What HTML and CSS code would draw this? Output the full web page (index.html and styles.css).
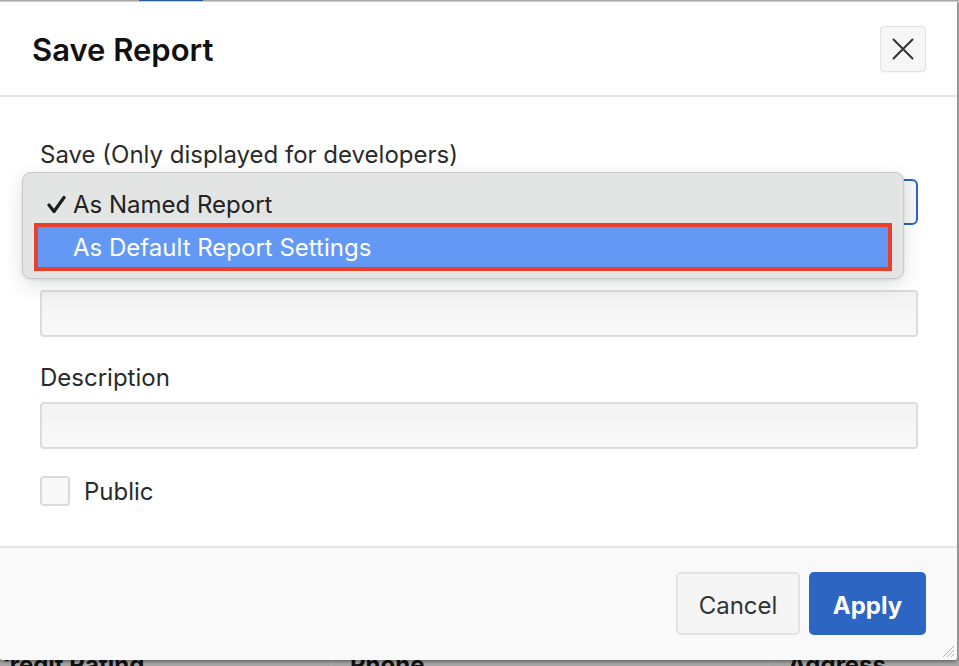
FILE: index.html
```html
<!DOCTYPE html>
<html>
<head>
<meta charset="utf-8">
<link rel="stylesheet" href="styles.css">
</head>
<body>
<div class="page">
  <div class="topbar"><span class="tab-active"></span></div>
  <div class="dialog">
    <div class="dlg-header">
      <h1 class="dlg-title">Save Report</h1>
      <button class="close-btn" aria-label="Close">
        <svg width="22" height="22" viewBox="0 0 22 22"><path d="M1.5 1.5 L20.5 20.5 M20.5 1.5 L1.5 20.5" stroke="#333" stroke-width="2" fill="none" stroke-linecap="round"/></svg>
      </button>
    </div>
    <div class="dlg-body">
      <div class="field">
        <label class="field-label">Save (Only displayed for developers)</label>
        <div class="select-box"></div>
        <div class="menu">
          <div class="menu-item"><span class="check">
            <svg width="19" height="19" viewBox="0 0 19 19"><path d="M2 10 L7 16.5 L17 2.5" stroke="#1e1e1e" stroke-width="3.2" fill="none" stroke-linecap="round" stroke-linejoin="round"/></svg>
          </span>As Named Report</div>
          <div class="menu-item selected"><span class="check"></span>As Default Report Settings</div>
        </div>
      </div>
      <div class="field">
        <label class="field-label">Name</label>
        <div class="text-input"></div>
      </div>
      <div class="field">
        <label class="field-label">Description</label>
        <div class="text-input"></div>
      </div>
      <div class="check-row">
        <span class="checkbox"></span>
        <span class="check-label">Public</span>
      </div>
    </div>
    <div class="dlg-footer">
      <button class="btn btn-cancel">Cancel</button>
      <button class="btn btn-apply">Apply</button>
      <span class="resize">
        <svg width="14" height="14" viewBox="0 0 14 14"><path d="M13 2 L2 13 M13 6 L6 13 M13 10 L10 13" stroke="#b5b5b5" stroke-width="1"/></svg>
      </span>
    </div>
  </div>
  <div class="table-head">
    <div class="th th1"><span class="th-text shift">Credit Rating</span></div>
    <div class="th th2"><span class="th-text">Phone</span></div>
    <div class="th th3"><span class="th-text">Address</span></div>
  </div>
</div>
</body>
</html>
```
FILE: styles.css
```css
* { box-sizing: border-box; }
html, body { margin: 0; padding: 0; }
body {
  font-family: Inter, "Noto Sans", "Liberation Sans", sans-serif;
  color: #262626;
  background: #a4a4a4;
}
.page {
  width: 959px;
  height: 666px;
  overflow: hidden;
  display: flex;
  flex-direction: column;
  background: #a4a4a4;
}
.topbar {
  height: 2px;
  flex: none;
  background: #a8a8a8;
  padding-left: 139px;
  border-bottom: 1px solid #d0d0d0;
}
.tab-active {
  display: block;
  width: 64px;
  height: 1px;
  background: #2f5d96;
}
.dialog {
  flex: none;
  width: 957px;
  height: 658px;
  background: #fff;
  display: flex;
  flex-direction: column;
  border-radius: 0 0 3px 3px;
  box-shadow: 0 2px 3px rgba(0,0,0,0.35);
  position: relative;
  z-index: 1;
}
.dlg-header {
  height: 95px;
  flex: none;
  border-bottom: 2px solid #e6e6e6;
  display: flex;
  align-items: center;
  justify-content: space-between;
  padding: 0 31px 0 32px;
}
.dlg-title {
  margin: 0;
  font-size: 31px;
  font-weight: 600;
  color: #111;
  letter-spacing: 0;
  position: relative;
  top: 1px;
}
.close-btn {
  width: 46px;
  height: 46px;
  border: 1px solid #e2e2e2;
  border-radius: 4px;
  background: #f6f6f6;
  display: flex;
  align-items: center;
  justify-content: center;
  padding: 0;
  box-shadow: 0 1px 2px rgba(0,0,0,0.04);
}
.dlg-body {
  flex: none;
  height: 449px;
  padding: 44px 39px 41px 40px;
  display: flex;
  flex-direction: column;
  gap: 27px;
}
.field {
  display: flex;
  flex-direction: column;
  position: relative;
}
.field-label {
  display: block;
  height: 28px;
  line-height: 28px;
  font-size: 24px;
  color: #2a2a2a;
  margin-bottom: 10px;
}
.select-box {
  height: 46px;
  border: 2px solid #2b64c2;
  border-radius: 6px;
  background: #f7f7f7;
}
.text-input {
  height: 47px;
  border: 2px solid #dcdcdc;
  border-radius: 4px;
  background: linear-gradient(#f3f3f3, #f9f9f9);
}
.menu {
  position: absolute;
  left: -18px;
  top: 31px;
  width: 882px;
  height: 107px;
  background: #e3e4e4;
  border: 1px solid #c9c9c9;
  border-radius: 9px;
  box-shadow: 0 6px 20px rgba(0,0,0,0.12), 0 1px 3px rgba(0,0,0,0.1);
  padding: 11px 11px 0 11px;
  z-index: 5;
}
.menu-item {
  height: 40px;
  display: flex;
  align-items: center;
  font-size: 24px;
  color: #222;
}
.menu-item .check {
  width: 39px;
  flex: none;
  display: flex;
  justify-content: flex-end;
  padding-right: 7px;
}
.menu-item.selected {
  height: 48px;
  border: 4px solid #e8402a;
  background: #6399f5;
  color: #fff;
  margin-top: -1px;
}
.menu-item.selected .check { width: 35px; }
.check-row {
  display: flex;
  align-items: center;
  gap: 14px;
  height: 30px;
}
.checkbox {
  width: 30px;
  height: 30px;
  border: 2px solid #dadada;
  border-radius: 4px;
  background: #f8f8f8;
  flex: none;
}
.check-label {
  font-size: 24px;
  color: #2a2a2a;
}
.dlg-footer {
  flex: 1;
  border-top: 2px solid #e6e6e6;
  background: #f9f9f9;
  display: flex;
  justify-content: flex-end;
  align-items: flex-start;
  padding: 24px 31px 0 0;
  gap: 9px;
  border-radius: 0 0 3px 3px;
  position: relative;
}
.btn {
  height: 63px;
  border-radius: 5px;
  font-family: Inter, "Noto Sans", "Liberation Sans", sans-serif;
  font-size: 24px;
  padding: 3px 0 0 0;
}
.btn-cancel {
  width: 124px;
  background: #f5f5f5;
  border: 2px solid #e3e3e3;
  color: #333;
}
.btn-apply {
  width: 117px;
  background: #2d66c2;
  border: none;
  color: #fff;
  font-weight: 700;
}
.resize {
  position: absolute;
  right: 2px;
  bottom: 2px;
  width: 14px;
  height: 14px;
  display: block;
}
.resize svg { display: block; }
.table-head {
  flex: none;
  height: 8px;
  display: flex;
  background: #a4a4a4;
  overflow: hidden;
  margin-top: -1px;
}
.th {
  height: 30px;
  font-size: 24px;
  font-weight: 700;
  color: #111;
  line-height: 30px;
  margin-top: -9px;
}
.th1 { width: 332px; border-right: 1px solid #b0b0b0; }
.th2 { width: 438px; padding-left: 18px; border-right: 1px solid #b0b0b0; }
.th3 { flex: 1; padding-left: 18px; }
.shift { margin-left: -8px; }
```
